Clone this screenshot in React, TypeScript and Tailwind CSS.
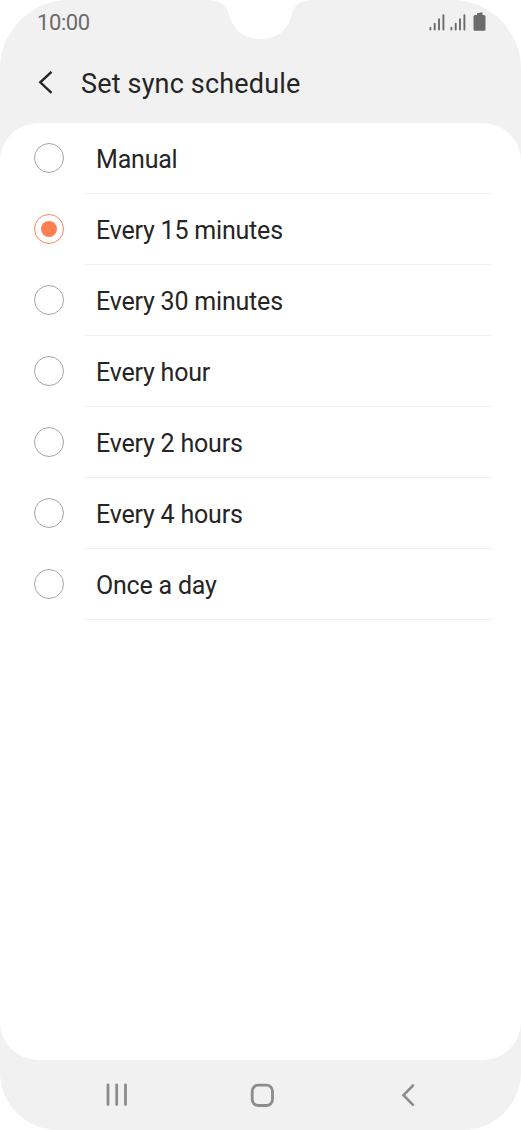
import { useState } from "react";

const options = [
    "Manual",
    "Every 15 minutes",
    "Every 30 minutes",
    "Every hour",
    "Every 2 hours",
    "Every 4 hours",
    "Once a day",
];

function Signal() {
    return (
        <svg width="16" height="17" viewBox="0 0 16 17" stroke="#6b6b6b" strokeWidth="1.9" strokeLinecap="round">
            <path d="M1.4 13.6V15.6M5.7 9.6V15.6M10 5.2V15.6M14.4 1.200V15.6" />
        </svg>
    );
}

function StatusBar() {
    return (
        <div className="relative flex h-[46px] justify-between pl-[37px] pr-[35px]">
            <span className="mt-[8px] text-[22px] leading-[30px] tracking-[-0.4px] text-[#6b6b6b]">10:00</span>

            {/* Camera notch */}
            <svg className="absolute left-[210px] top-0" width="100" height="40" viewBox="0 0 100 40" fill="#fff">
                <path d="M0 0C11 1 15.500 6 18 12C22 25 29 39 50.500 39C72 39 78.500 26 82 14C84.500 6 89 1 100 0Z" />
            </svg>

            <div className="flex pt-[14px]">
                <Signal />
                <div className="ml-[5px]">
                    <Signal />
                </div>
                <svg className="-mt-[2px] ml-[7px]" width="13" height="19" viewBox="0 0 13 19" fill="#6b6b6b">
                    <path d="M4 1.200L9.500 .2V3H11Q12.500 3 12.500 4.500V17.500Q12.500 18.700 11.500 18.700H1.500Q.5 18.700 .5 17.500V4.500Q.5 3 2 3H4Z" />
                </svg>
            </div>
        </div>
    );
}

export default function App() {
    const [selected, setSelected] = useState(1);

    return (
        <div className="h-[1130px] w-[521px] bg-white font-['Roboto',sans-serif]">
            <div className="flex h-full flex-col overflow-hidden rounded-t-[69px] rounded-b-[58px] bg-[#f1f1f1]">
                <StatusBar />

                <header className="flex h-[77px] items-center pb-[3px] pl-[37px]">
                    <button aria-label="Back">
                        <svg width="16" height="24" viewBox="0 0 16 24" fill="none" stroke="#252525" strokeWidth="2.4">
                            <path d="M14.500 .8L3.300 11.300L14.500 21.900" />
                        </svg>
                    </button>
                    <h1 className="ml-[28px] pt-[2px] text-[27px] tracking-[0.17px] text-[#252525]">Set sync schedule</h1>
                </header>

                <main className="h-[937px] rounded-[38px] bg-white">
                    {options.map((option, index) => (
                        <button
                            key={option}
                            className="flex h-[71px] w-full text-left"
                            onClick={() => setSelected(index)}
                        >
                            <span
                                className={`ml-[34px] mt-[20px] flex size-[30px] items-center justify-center rounded-full border ${
                                    selected === index ? "border-[#fb8559]" : "border-[#a6a6a6]"
                                }`}
                            >
                                {selected === index && <span className="size-4 rounded-full bg-[#ff7f50]" />}
                            </span>
                            <span className="ml-[20px] flex h-[71px] w-[408px] items-center border-b border-[#f0f0f0] pl-[12px] pt-[4px] text-[25px] tracking-[-0.2px] text-[#252525]">
                                {option}
                            </span>
                        </button>
                    ))}
                </main>

                {/* Navigation buttons */}
                <nav className="flex h-[70px] items-center pl-[106px]">
                    <svg width="22" height="24" viewBox="0 0 22 24" stroke="#8c8c8c" strokeWidth="2.800" strokeLinecap="round">
                        <path d="M2 2V21.500M10.700 2V21.500M19.500 2V21.500" />
                    </svg>
                    <svg className="ml-[122px]" width="24" height="24" viewBox="0 0 24 24" fill="none" stroke="#8c8c8c" strokeWidth="2.800">
                        <rect x="2.200" y="2.200" width="20.300" height="20.300" rx="6" />
                    </svg>
                    <svg className="ml-[127px]" width="14" height="24" viewBox="0 0 14 24" fill="none" stroke="#8c8c8c" strokeWidth="2.600" strokeLinecap="round">
                        <path d="M12 2.500L2.500 12.200L12 21.900" />
                    </svg>
                </nav>
            </div>
        </div>
    );
}
